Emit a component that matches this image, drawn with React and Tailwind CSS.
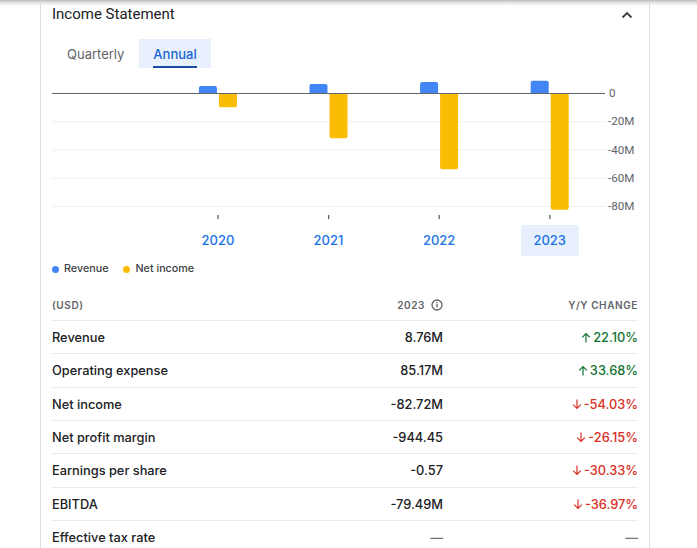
import React from "react";

const SCALE = 113 / 80; // px per million
const years = [
  { y: "2020", rev: 5, ni: 10 },
  { y: "2021", rev: 6.4, ni: 32 },
  { y: "2022", rev: 7.8, ni: 54 },
  { y: "2023", rev: 8.76, ni: 82.72 },
];
const SLOT = 553 / 5;
const ZERO = 18;

function Chart() {
  const grid = [1, 2, 3, 4];
  return (
    <svg width="586" height="145" viewBox="0 0 586 145" className="block">
      {grid.map((g) => (
        <line key={g} x1="0" x2="553" y1={ZERO + g * 28.25 + 0.5} y2={ZERO + g * 28.25 + 0.5} stroke="#eeeff1" strokeWidth="1" />
      ))}
      {years.map((d, i) => {
        const cx = SLOT * (i + 1.5);
        const rh = d.rev * SCALE;
        const nh = d.ni * SCALE;
        const bx = cx - 19;
        const yx = cx + 1;
        return (
          <g key={d.y}>
            <path d={`M${bx} ${ZERO} V${ZERO - rh + 2} Q${bx} ${ZERO - rh} ${bx + 2} ${ZERO - rh} H${bx + 16} Q${bx + 18} ${ZERO - rh} ${bx + 18} ${ZERO - rh + 2} V${ZERO} Z`} fill="#4285f4" />
            <path d={`M${yx} ${ZERO} V${ZERO + nh - 2} Q${yx} ${ZERO + nh} ${yx + 2} ${ZERO + nh} H${yx + 16} Q${yx + 18} ${ZERO + nh} ${yx + 18} ${ZERO + nh - 2} V${ZERO} Z`} fill="#fbbc04" />
            <rect x={cx - 0.5} y="140" width="1.3" height="4" fill="#5f6368" />
          </g>
        );
      })}
      <line x1="0" x2="553" y1={ZERO + 0.5} y2={ZERO + 0.5} stroke="#5f6368" strokeWidth="1.2" />
      <g fontFamily="Roboto, sans-serif" fontSize="11.6" fill="#5f6368">
        <text x="557" y={ZERO + 4}>0</text>
        {grid.map((g) => (
          <text key={g} x="556" y={ZERO + g * 28.25 + 4}>{`-${g * 20}M`}</text>
        ))}
      </g>
    </svg>
  );
}

function Up() {
  return (
    <svg width="10" height="11" viewBox="0 0 10 11" className="mr-[2px]">
      <path d="M5 10.5V1.5M1.2 5.3L5 1.5L8.8 5.3" fill="none" stroke="currentColor" strokeWidth="1.2" />
    </svg>
  );
}
function Down() {
  return (
    <svg width="10" height="11" viewBox="0 0 10 11" className="mr-[2px]">
      <path d="M5 0.5V9.5M1.2 5.7L5 9.5L8.8 5.7" fill="none" stroke="currentColor" strokeWidth="1.2" />
    </svg>
  );
}

const rows = [
  ["Revenue", "8.76M", "22.10%", true],
  ["Operating expense", "85.17M", "33.68%", true],
  ["Net income", "-82.72M", "-54.03%", false],
  ["Net profit margin", "-944.45", "-26.15%", false],
  ["Earnings per share", "-0.57", "-30.33%", false],
  ["EBITDA", "-79.49M", "-36.97%", false],
];

export default function App() {
  return (
    <div className="relative h-[548px] w-[697px] overflow-hidden bg-white" style={{ fontFamily: "Inter, Roboto, sans-serif" }}>
      <div className="absolute inset-x-0 top-0 z-10 h-[6px] bg-gradient-to-b from-[#bdbdbd] via-[#e6e6e6] to-transparent" />
      <div className="ml-[40px] h-[548px] w-[610px] border-x border-[#dadce0] px-[11px]">
        <div className="flex h-[28px] items-center justify-between">
          <span className="font-['Roboto'] text-[15px] text-[#202124]">Income Statement</span>
          <svg width="12" height="8" viewBox="0 0 12 8" className="mr-[5px] mt-[1px]">
            <path d="M1.5 6.5L6 2L10.5 6.5" fill="none" stroke="#3c4043" strokeWidth="1.8" />
          </svg>
        </div>
        <div className="mt-[11px] flex h-[29px]">
          <div className="flex flex-col items-center px-[15px] pt-[7px]">
            <span className="text-[13px] leading-[16px] text-[#5f6368]">Quarterly</span>
          </div>
          <div className="flex flex-col items-center bg-[#e8f0fe] px-[14px] pt-[7px]">
            <span className="text-[13px] leading-[16px] font-medium text-[#1967d2]">Annual</span>
            <div className="mt-[4px] h-[2px] w-full bg-[#174ea6]" />
          </div>
        </div>
        <div className="mt-[7px]">
          <Chart />
        </div>
        <div className="mt-[5px] grid h-[31px] w-[553px] grid-cols-5">
          <div />
          {years.map((d, i) => (
            <div key={d.y} className="flex items-center justify-center">
              <div className={`flex h-[31px] w-[58px] items-center justify-center rounded-[3px] pt-[1px] text-[13px] font-medium text-[#1a73e8] ${i === 3 ? "bg-[#e8f0fe]" : ""}`}>
                {d.y}
              </div>
            </div>
          ))}
        </div>
        <div className="mt-[5px] flex h-[16px] items-center text-[10.75px] font-medium text-[#3c4043]">
          <span className="mr-[5px] h-[7px] w-[7px] rounded-full bg-[#4285f4]" />
          <span>Revenue</span>
          <span className="ml-[15px] mr-[5px] h-[7px] w-[7px] rounded-full bg-[#fbbc04]" />
          <span>Net income</span>
        </div>
        <div className="mt-[13px]">
          <div className="grid h-[30px] grid-cols-[1fr_120px_195px] items-center text-[10px] font-semibold tracking-[0.06em] text-[#5f6368]">
            <span>(USD)</span>
            <span className="flex items-center justify-end gap-[6px]">
              2023
              <svg width="12" height="12" viewBox="0 0 12 12">
                <circle cx="6" cy="6" r="5" fill="none" stroke="#5f6368" strokeWidth="1.3" />
                <rect x="5.35" y="5" width="1.3" height="3.6" fill="#5f6368" />
                <rect x="5.35" y="3" width="1.3" height="1.3" fill="#5f6368" />
              </svg>
            </span>
            <span className="text-right">Y/Y CHANGE</span>
          </div>
          {rows.map(([label, val, chg, up]) => (
            <div key={label} className="grid h-[33.33px] grid-cols-[1fr_120px_195px] items-center border-t border-[#e8eaed] pt-[1px] text-[12.8px] font-medium text-[#202124]">
              <span>{label}</span>
              <span className="text-right">{val}</span>
              <span className={`flex items-center justify-end ${up ? "text-[#137333]" : "text-[#d93025]"}`}>
                {up ? <Up /> : <Down />}
                {chg}
              </span>
            </div>
          ))}
          <div className="grid h-[33.33px] grid-cols-[1fr_120px_195px] items-center border-t border-[#e8eaed] pt-[1px] text-[12.8px] font-medium text-[#202124]">
            <span>Effective tax rate</span>
            <span className="text-right text-[#70757a]">—</span>
            <span className="text-right text-[#70757a]">—</span>
          </div>
        </div>
      </div>
    </div>
  );
}
